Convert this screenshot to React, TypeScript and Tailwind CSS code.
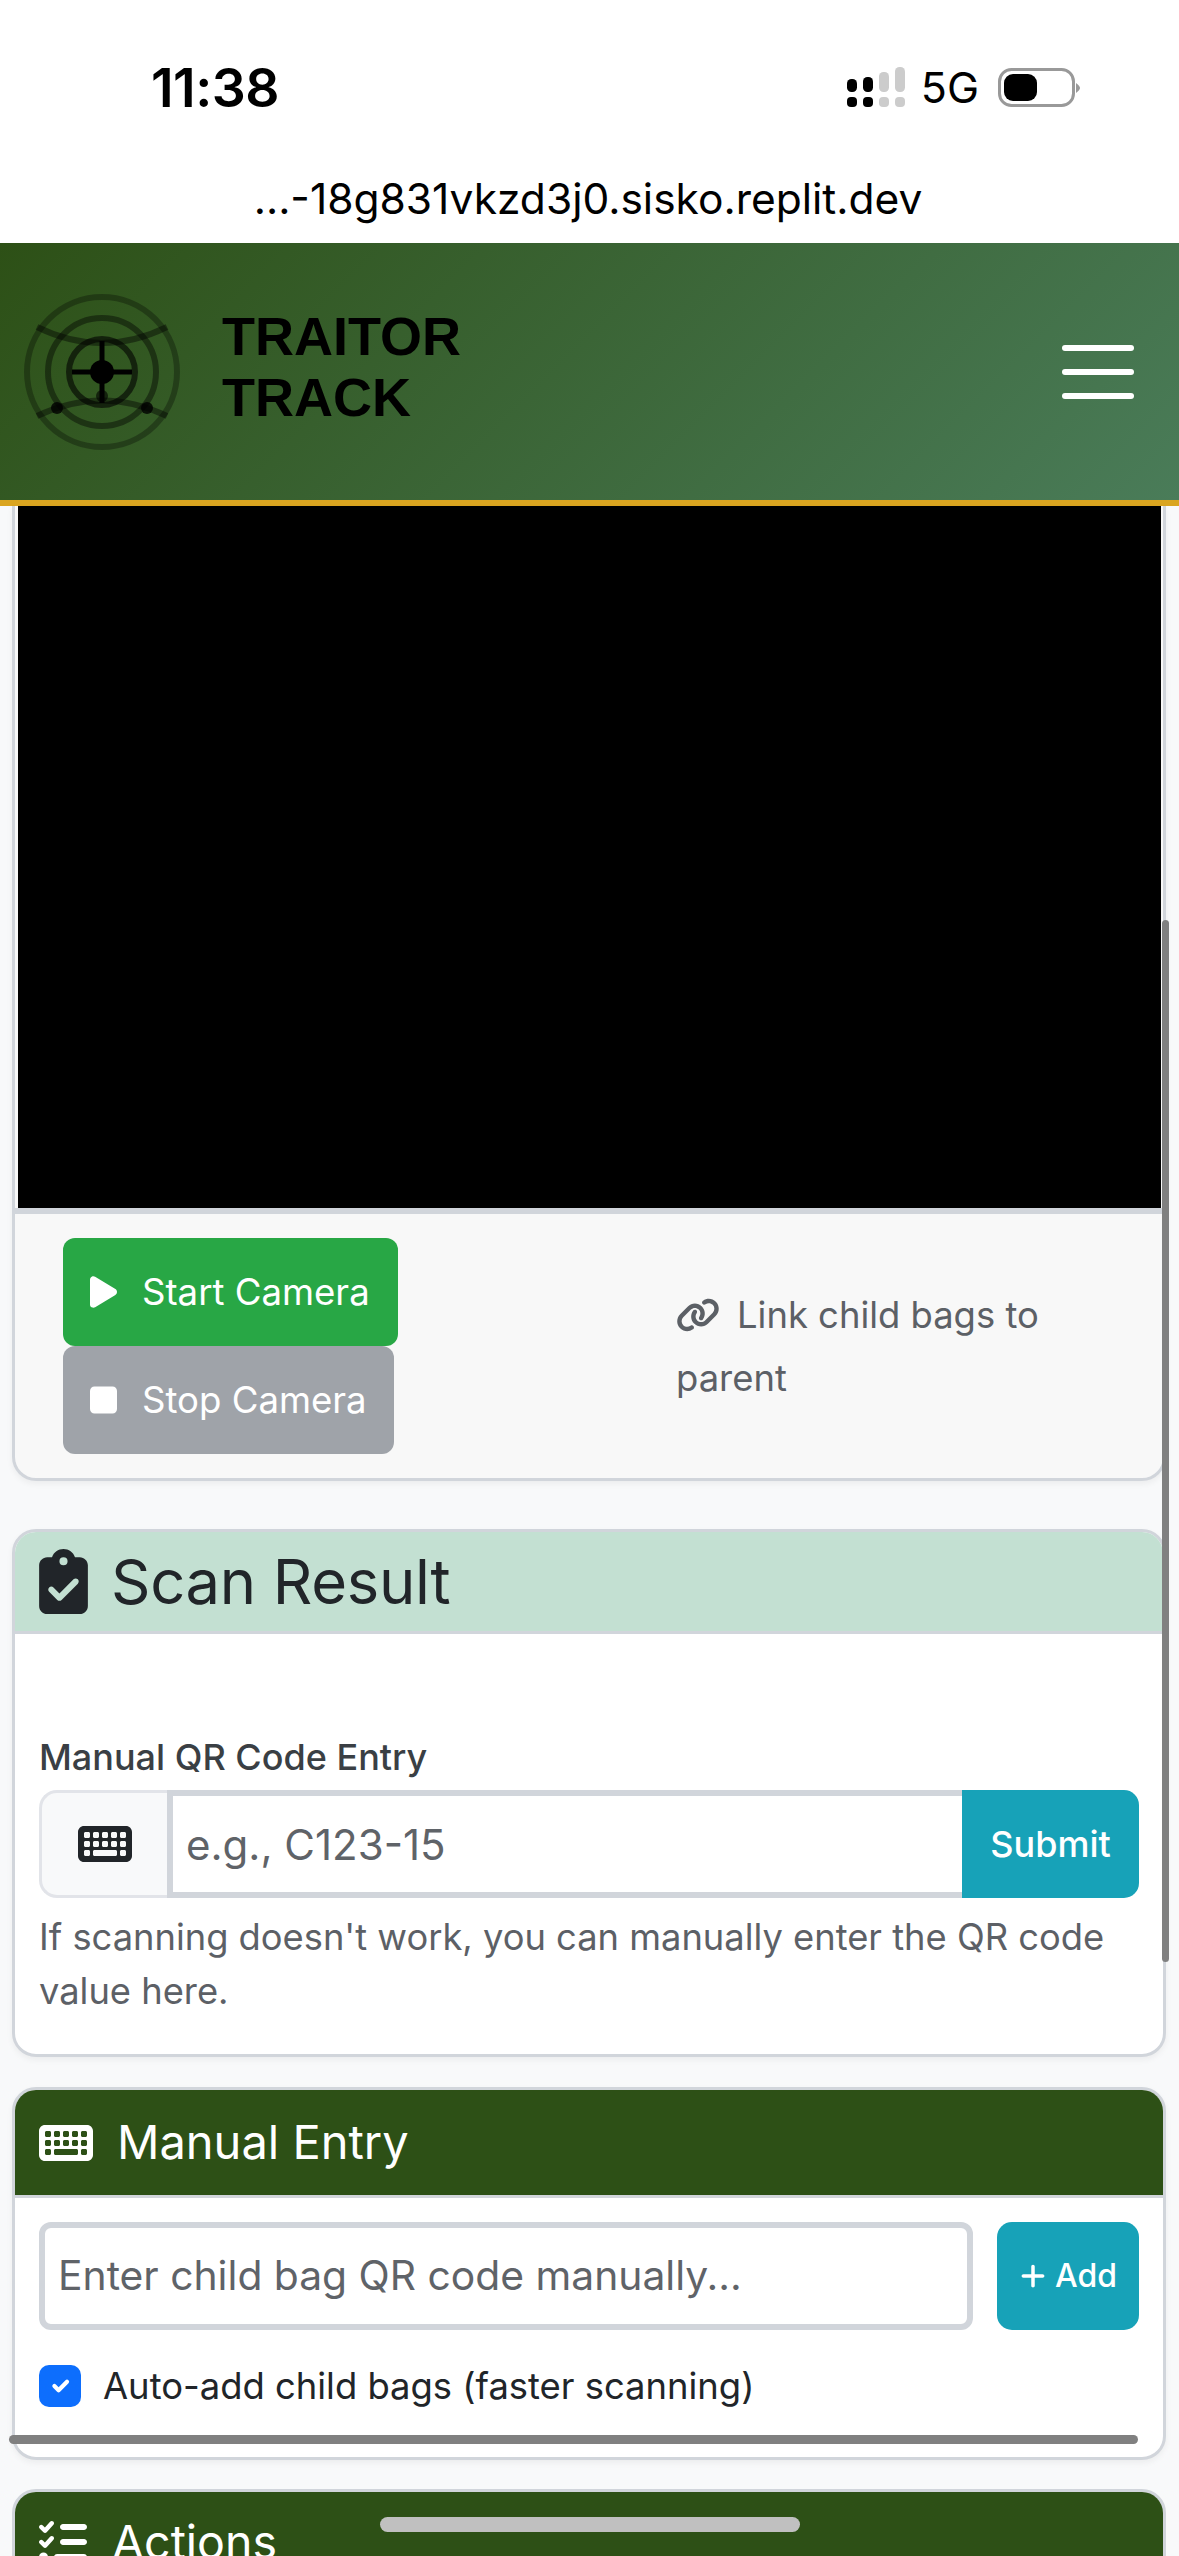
import { FaClipboardCheck, FaKeyboard, FaLink, FaPlay, FaPlus, FaStop, FaListCheck } from "react-icons/fa6";

function Signal() {
  return (
    <svg width="58" height="40" viewBox="846 67 58 40" className="block">
      <rect x="846" y="79" width="10" height="13" rx="4.5" fill="#000" />
      <rect x="862" y="77" width="10" height="15" rx="4.5" fill="#000" />
      <rect x="878" y="72" width="10" height="20" rx="4.5" fill="#ccc" />
      <rect x="894" y="67" width="10" height="25" rx="4.5" fill="#ccc" />
      <rect x="846" y="97" width="10" height="10" rx="4" fill="#000" />
      <rect x="862" y="97" width="10" height="10" rx="4" fill="#000" />
      <rect x="878" y="97" width="10" height="10" rx="4" fill="#ccc" />
      <rect x="894" y="97" width="10" height="10" rx="4" fill="#ccc" />
    </svg>
  );
}

function Battery() {
  return (
    <svg width="83" height="39" viewBox="999 68 83 39" className="block">
      <rect x="1000.5" y="69.5" width="74" height="36" rx="12" fill="none" stroke="#999" strokeWidth="3" />
      <rect x="1005" y="74" width="33" height="27" rx="9" fill="#000" />
      <path d="M1077 83 Q1081 86 1081 88 Q1081 90 1077 93 Z" fill="#999" />
    </svg>
  );
}

function Logo() {
  return (
    <svg width="170" height="170" viewBox="17 286 170 170" className="block shrink-0" fill="none" stroke="#000">
      <circle cx="102" cy="371" r="75" strokeWidth="6" opacity="0.3" />
      <circle cx="102" cy="371" r="54" strokeWidth="6" opacity="0.42" />
      <circle cx="102" cy="371" r="33" strokeWidth="6" opacity="0.6" />
      <path d="M37 326 Q102 358 167 326" strokeWidth="6" opacity="0.42" />
      <path d="M37 415 Q102 384 167 415" strokeWidth="6" opacity="0.42" />
      <path d="M102 340V402M72 371H132" strokeWidth="5" />
      <circle cx="102" cy="371" r="12" fill="#000" stroke="none" />
      <circle cx="102" cy="395" r="6" fill="#000" stroke="none" opacity="0.6" />
      <circle cx="57" cy="407" r="6" fill="#000" stroke="none" opacity="0.8" />
      <circle cx="147" cy="407" r="6" fill="#000" stroke="none" opacity="0.8" />
    </svg>
  );
}

export default function App() {
  return (
    <div className="relative w-[1179px] h-[2556px] overflow-hidden bg-[#f8f9fa] text-[#212529] [font-family:Inter,sans-serif]">
      {/* Status bar + address */}
      <div className="h-[243px] bg-white flex flex-col">
        <div className="h-[172px] flex items-start justify-between pl-[151px] pr-[98px] pt-[58px]">
          <span className="text-[53.5px] leading-[60px] font-semibold text-black tracking-[-0.5px]">11:38</span>
          <div className="flex items-center gap-[19px] pt-[9px]">
            <Signal />
            <span className="text-[43px] leading-[40px] font-normal text-black ml-[-3px]">5G</span>
            <Battery />
          </div>
        </div>
        <div className="text-center text-[42.5px] leading-[50px] text-black pt-[2px] pr-[3px]">...-18g831vkzd3j0.sisko.replit.dev</div>
      </div>

      {/* Nav */}
      <header className="h-[263px] border-b-[6px] border-[#daa520] bg-[linear-gradient(135deg,#2d5016,#4a7c59)] flex items-center justify-between pl-[17px] pr-[45px]">
        <div className="flex items-center gap-[35px]">
          <Logo />
          <div className="text-[54px] leading-[60.5px] mt-[-10px] font-bold text-black [font-family:'Liberation_Sans',sans-serif]">
            TRAITOR<br />TRACK
          </div>
        </div>
        <div className="flex flex-col gap-[18px] w-[72px]">
          <span className="block h-[6px] rounded-full bg-white" />
          <span className="block h-[6px] rounded-full bg-white" />
          <span className="block h-[6px] rounded-full bg-white" />
        </div>
      </header>

      {/* Content */}
      <main className="flex flex-col pl-[12px] pr-[13px]">
        {/* Camera card */}
        <section className="border-x-[3px] border-b-[3px] border-[#d1d5db] rounded-b-[24px] bg-[#f8f8f8] shadow-[0_3px_6px_rgba(0,0,0,0.05)] overflow-hidden">
          <div className="h-[702px] bg-black ml-[3px] mr-[2px]" />
          <div className="h-[270px] border-t-[6px] border-[#d1d5db] flex items-center pl-[48px]">
            <div className="flex flex-col items-start w-[613px]">
              <button className="h-[108px] w-[335px] rounded-[12px] bg-[#28a745] text-white text-[36.6px] flex items-center pl-[27px]">
                <FaPlay className="w-[27px] h-[36px] mr-[25px]" />
                Start Camera
              </button>
              <button className="h-[108px] w-[331px] rounded-[12px] bg-[#9fa3a9] text-white text-[36.6px] flex items-center pl-[27px]">
                <FaStop className="w-[27px] h-[36px] mr-[25px]" />
                Stop Camera
              </button>
            </div>
            <div className="text-[36.4px] leading-[63px] text-[#5c6066] w-[400px] mt-[2px]">
              <FaLink className="inline-block w-[44px] h-[36px] mr-[17px] align-[-5px]" />
              Link child bags to parent
            </div>
          </div>
        </section>

        {/* Scan Result */}
        <section className="mt-[48px] border-[3px] border-[#d1d5db] rounded-[24px] bg-white shadow-[0_3px_6px_rgba(0,0,0,0.05)] overflow-hidden">
          <div className="h-[99px] bg-[#c3e0d2] border-b-[3px] border-[#d1d5db] box-content flex items-center pl-[24px]">
            <FaClipboardCheck className="w-[49px] h-[65px] mr-[23px] text-[#212529]" />
            <h2 className="text-[61.5px] leading-[72px] font-normal tracking-[-0.3px]">Scan Result</h2>
          </div>
          <div className="px-[24px] pt-[101px] h-[420px]">
            <label className="block text-[36px] leading-[44px] font-medium text-[#3a3f44] mb-[11px]">Manual QR Code Entry</label>
            <div className="flex h-[108px]">
              <div className="w-[128px] bg-[#f8f9fa] border-[3px] border-r-0 border-[#e2e4e9] rounded-l-[18px] flex items-center justify-center">
                <FaKeyboard className="w-[54px] h-[54px] text-[#212529]" />
              </div>
              <input
                readOnly
                placeholder="e.g., C123-15"
                className="flex-1 min-w-0 border-[6px] border-r-0 border-[#d1d5db] bg-white pl-[13px] text-[42px] outline-none placeholder:text-[#5f6368]"
              />
              <button className="w-[177px] bg-[#17a2b8] text-white text-[36px] font-medium rounded-r-[15px]">Submit</button>
            </div>
            <p className="mt-[12px] text-[36.3px] leading-[54px] text-[#5c6066]">
              If scanning doesn't work, you can manually enter the QR code value here.
            </p>
          </div>
        </section>

        {/* Manual Entry */}
        <section className="mt-[30px] border-[3px] border-[#d1d5db] rounded-[24px] bg-white shadow-[0_3px_6px_rgba(0,0,0,0.05)] overflow-hidden">
          <div className="h-[105px] box-content bg-[#2d5016] border-b-[3px] border-[#d1d5db] flex items-center pl-[24px] text-white">
            <FaKeyboard className="w-[54px] h-[54px] mr-[24px]" />
            <h3 className="text-[47px] leading-[54px] font-normal mt-[-2px]">Manual Entry</h3>
          </div>
          <div className="px-[24px] pt-[24px] h-[259px]">
            <div className="flex h-[108px] gap-[24px]">
              <input
                readOnly
                placeholder="Enter child bag QR code manually..."
                className="flex-1 min-w-0 border-[6px] border-[#d1d5db] rounded-[12px] bg-white pl-[13px] text-[40.8px] outline-none placeholder:text-[#5f6368]"
              />
              <button className="w-[142px] rounded-[15px] bg-[#17a2b8] text-white text-[32px] font-medium flex items-center justify-center gap-[8px]">
                <FaPlus className="w-[28px] h-[28px]" />
                Add
              </button>
            </div>
            <label className="mt-[35px] flex items-center gap-[22px] text-[36.4px] leading-[42px] text-[#212529]">
              <span className="w-[42px] h-[42px] rounded-[10px] bg-[#0d6efd] flex items-center justify-center">
                <svg width="28" height="28" viewBox="0 0 20 20" fill="none" stroke="#fff" strokeWidth="3" strokeLinecap="round" strokeLinejoin="round">
                  <path d="m6 10 3 3 6-6" />
                </svg>
              </span>
              Auto-add child bags (faster scanning)
            </label>
          </div>
        </section>

        {/* Actions */}
        <section className="mt-[29px] border-[3px] border-[#d1d5db] rounded-t-[24px] overflow-hidden">
          <div className="h-[100px] bg-[#2d5016] flex items-center pl-[24px] text-white">
            <FaListCheck className="w-[48px] h-[48px] mr-[25px]" />
            <h3 className="text-[46.5px] leading-[54px] font-normal">Actions</h3>
          </div>
        </section>
      </main>

      {/* Scroll indicators and home bar */}
      <div className="absolute left-[1162px] top-[920px] w-[7px] h-[1042px] rounded-full bg-[#808080]" />
      <div className="absolute left-[9px] top-[2435px] w-[1129px] h-[9px] rounded-full bg-[#808080]" />
      <div className="absolute left-[380px] top-[2517px] w-[420px] h-[15px] rounded-full bg-[#c0c0c0]" />
    </div>
  );
}
